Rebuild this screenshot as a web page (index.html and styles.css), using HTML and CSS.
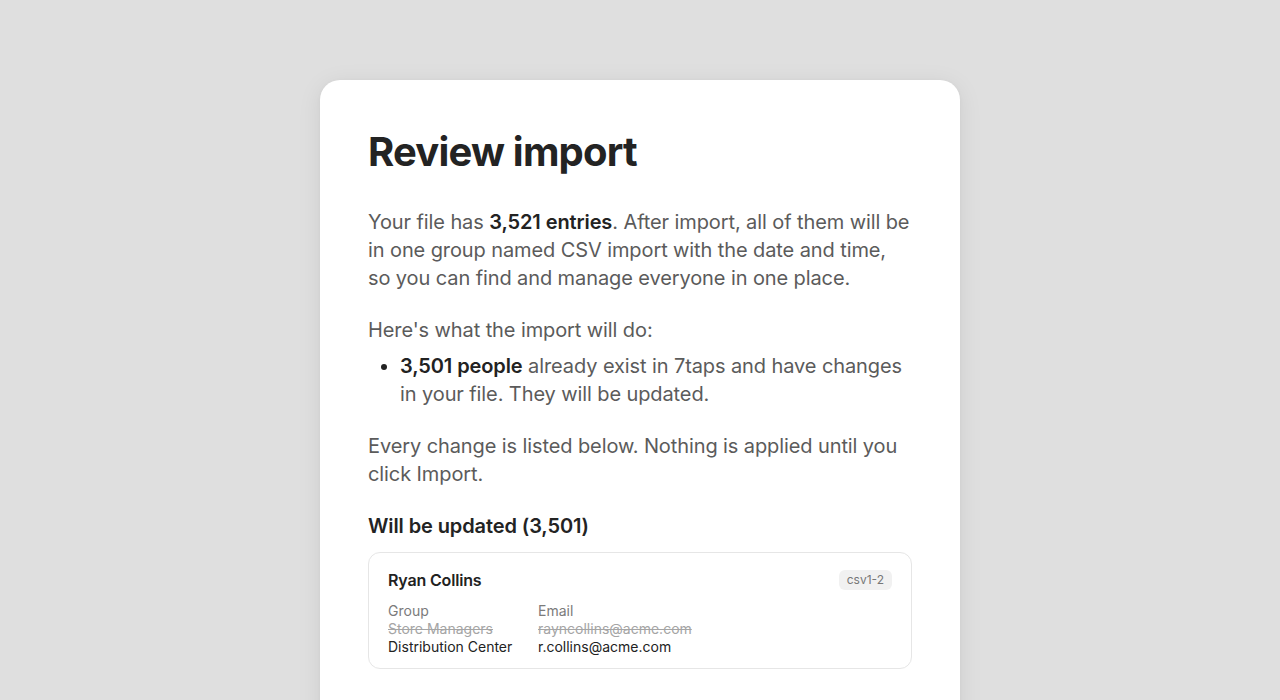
FILE: index.html
```html
<!DOCTYPE html>
<html>
<head>
  <meta charset="utf-8">
  <link rel="stylesheet" href="styles.css">
</head>
<body>
  <div class="page">
    <div class="dialog">
      <h1 class="dialog-title">Review import</h1>

      <p class="text">Your file has <b>3,521 entries</b>. After import, all of them will be in one group named CSV import with the date and time, so you can find and manage everyone in one place.</p>

      <p class="text text-lead">Here's what the import will do:</p>
      <ul class="summary">
        <li><b>3,501 people</b> already exist in 7taps and have changes in your file. They will be updated.</li>
      </ul>

      <p class="text">Every change is listed below. Nothing is applied until you click Import.</p>

      <h2 class="section-title">Will be updated (3,501)</h2>

      <div class="change">
        <div class="change-head">
          <span class="change-name">Ryan Collins</span>
          <span class="change-tag">csv1-2</span>
        </div>
        <div class="change-fields">
          <div class="field">
            <span class="field-label">Group</span>
            <span class="field-old">Store Managers</span>
            <span class="field-new">Distribution Center</span>
          </div>
          <div class="field">
            <span class="field-label">Email</span>
            <span class="field-old">rayncollins@acme.com</span>
            <span class="field-new">r.collins@acme.com</span>
          </div>
        </div>
      </div>
    </div>
  </div>
</body>
</html>
```

FILE: styles.css
```css
/* Global */

html, body {
  margin: 0;
  height: 100%;
}

body {
  background-color: #dfdfdf;
  font-family: Inter, "Noto Sans", sans-serif;
  color: #222;
  overflow: hidden;
}

.page {
  display: flex;
  justify-content: center;
  padding-top: 80px;
}

/* Dialog card */

.dialog {
  width: 544px;
  padding: 48px 48px 64px;
  background-color: #fff;
  border-radius: 20px;
  box-shadow: 0 4px 24px rgba(0, 0, 0, 0.08), 0 1px 4px rgba(0, 0, 0, 0.04);
}

.dialog-title {
  margin: 0 0 32px;
  font-size: 40px;
  line-height: 48px;
  font-weight: 700;
  letter-spacing: -0.02em;
  color: #232323;
}

.text {
  margin: 0 0 24px;
  font-size: 20px;
  line-height: 28px;
  color: #5b5b5b;
  letter-spacing: -0.005em;
}

.text b {
  font-weight: 600;
  color: #222;
}

.text-lead {
  margin-bottom: 8px;
}

.summary {
  margin: 0 0 24px;
  padding-left: 32px;
  font-size: 20px;
  line-height: 28px;
  color: #5b5b5b;
  letter-spacing: -0.005em;
}

.summary li::marker {
  color: #222;
}

.summary b {
  font-weight: 600;
  color: #222;
}

.section-title {
  margin: 0 0 12px;
  font-size: 20px;
  line-height: 28px;
  font-weight: 600;
  letter-spacing: -0.005em;
  color: #232323;
}

/* Changed record */

.change {
  border: 1px solid #e6e6e6;
  border-radius: 12px;
  padding: 16px 19px 12px;
}

.change-head {
  display: flex;
  justify-content: space-between;
  align-items: center;
}

.change-name {
  font-size: 16px;
  line-height: 22px;
  font-weight: 600;
  letter-spacing: -0.01em;
  color: #222;
}

.change-tag {
  padding: 0 8px;
  font-size: 12px;
  line-height: 20px;
  color: #777;
  background-color: #f1f1f1;
  border-radius: 6px;
}

.change-fields {
  display: flex;
  margin-top: 11px;
}

.field {
  display: flex;
  flex-direction: column;
  width: 150px;
  font-size: 14px;
  line-height: 18px;
}

.field-label {
  color: #7b7b7b;
}

.field-old {
  color: #a5a5a5;
  text-decoration: line-through;
}

.field-new {
  color: #222;
}
```
